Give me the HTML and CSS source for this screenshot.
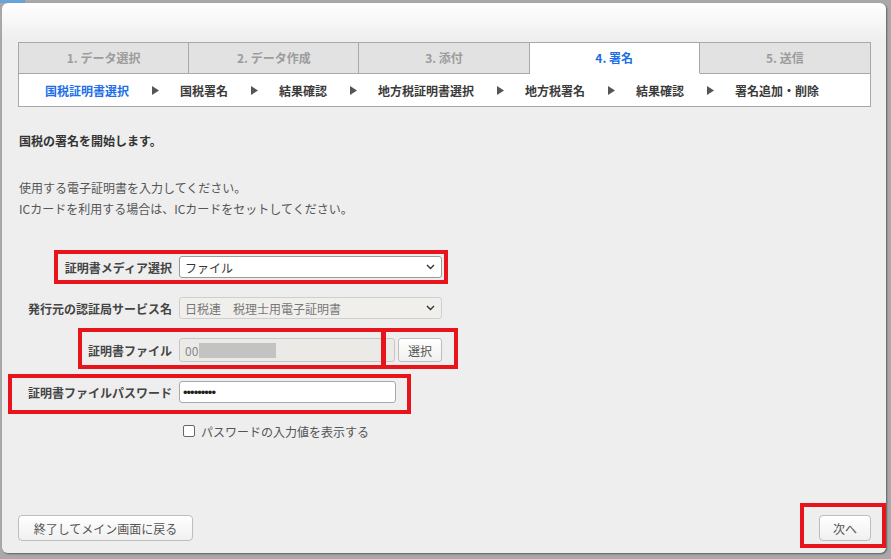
FILE: index.html
```html
<!DOCTYPE html>
<html lang="ja">
<head>
<meta charset="utf-8">
<title>署名</title>
<link rel="stylesheet" href="styles.css">
</head>
<body>
<div class="topstrip"></div>
<div class="dialog">
  <div class="steps">
    <div class="tabs">
      <div class="tab">1. データ選択</div>
      <div class="tab">2. データ作成</div>
      <div class="tab">3. 添付</div>
      <div class="tab active">4. 署名</div>
      <div class="tab">5. 送信</div>
    </div>
    <div class="substeps">
      <span class="sub current">国税証明書選択</span>
      <svg class="arrow" viewBox="0 0 7 9"><polygon points="0,0 7,4.5 0,9"/></svg>
      <span class="sub">国税署名</span>
      <svg class="arrow" viewBox="0 0 7 9"><polygon points="0,0 7,4.5 0,9"/></svg>
      <span class="sub">結果確認</span>
      <svg class="arrow" viewBox="0 0 7 9"><polygon points="0,0 7,4.5 0,9"/></svg>
      <span class="sub">地方税証明書選択</span>
      <svg class="arrow" viewBox="0 0 7 9"><polygon points="0,0 7,4.5 0,9"/></svg>
      <span class="sub">地方税署名</span>
      <svg class="arrow" viewBox="0 0 7 9"><polygon points="0,0 7,4.5 0,9"/></svg>
      <span class="sub">結果確認</span>
      <svg class="arrow" viewBox="0 0 7 9"><polygon points="0,0 7,4.5 0,9"/></svg>
      <span class="sub">署名追加・削除</span>
    </div>
  </div>

  <p class="lead">国税の署名を開始します。</p>
  <p class="info">使用する電子証明書を入力してください。<br>ICカードを利用する場合は、ICカードをセットしてください。</p>

  <div class="form">
    <div class="lbl">証明書メディア選択</div>
    <div class="select">
      <span>ファイル</span>
      <svg class="chev" viewBox="0 0 9 6"><polyline points="1,1 4.5,4.5 8,1"/></svg>
    </div>

    <div class="lbl">発行元の認証局サービス名</div>
    <div class="select disabled">
      <span>日税連　税理士用電子証明書</span>
      <svg class="chev" viewBox="0 0 9 6"><polyline points="1,1 4.5,4.5 8,1"/></svg>
    </div>

    <div class="lbl">証明書ファイル</div>
    <div class="filerow">
      <div class="input disabled"><span>00</span><span class="redact"></span></div>
      <button class="btn small" type="button">選択</button>
    </div>

    <div class="lbl">証明書ファイルパスワード</div>
    <div class="input pw"><span class="dots">•••••••••</span></div>

    <div class="lbl"></div>
    <div class="check"><span class="box"></span><span>パスワードの入力値を表示する</span></div>
  </div>

  <div class="footer">
    <button class="btn big" type="button">終了してメイン画面に戻る</button>
    <button class="btn next" type="button">次へ</button>
  </div>

  <div class="mark m1"></div>
  <div class="mark m2"></div>
  <div class="mark m3"></div>
  <div class="mark m4"></div>
  <div class="mark m5"></div>
</div>
</body>
</html>
```

FILE: styles.css
```css
html, body {
  margin: 0;
  padding: 0;
}

body {
  width: 891px;
  height: 559px;
  overflow: hidden;
  background: #a9a9a9;
  font-family: "Noto Sans CJK JP", "Noto Sans", sans-serif;
  position: relative;
}

.topstrip {
  position: absolute;
  left: 0;
  top: 0;
  width: 25px;
  height: 3px;
  background: #6aa3d8;
}

.dialog {
  position: relative;
  margin: 3px 0 0 2px;
  width: 884px;
  height: 550px;
  box-sizing: border-box;
  padding: 39px 15px 12px 16px;
  background: linear-gradient(#ffffff 0, #eeeeee 38px, #eeeeee 100%);
  border-radius: 6px;
  box-shadow: 1px 1px 2px rgba(0, 0, 0, 0.45);
  display: flex;
  flex-direction: column;
}

/* steps */
.steps {
  border: 1px solid #a8a8a8;
  background: #fff;
}

.tabs {
  display: grid;
  grid-template-columns: repeat(5, 1fr);
}

.tab {
  height: 30px;
  line-height: 30px;
  text-align: center;
  font-size: 12px;
  font-weight: bold;
  color: #9c9c9c;
  background: #e2e2e2;
  border-right: 1px solid #a8a8a8;
  border-bottom: 1px solid #a8a8a8;
}

.tab:last-child {
  border-right: 0;
}

.tab.active {
  background: #fff;
  color: #1c6fe6;
  border-bottom-color: #fff;
}

.substeps {
  height: 32px;
  display: flex;
  align-items: center;
  padding-left: 26px;
  font-size: 12px;
  font-weight: bold;
  color: #3a3a3a;
}

.sub {
  white-space: nowrap;
}

.sub.current {
  color: #1c6fe6;
}

.arrow {
  width: 7px;
  height: 9px;
  margin: 0 21px 0 23px;
  fill: #555;
}

/* text */
.lead {
  margin: 25px 0 0 1px;
  font-size: 12px;
  line-height: 18px;
  font-weight: bold;
  color: #333;
}

.info {
  margin: 27px 0 0 1px;
  font-size: 12px;
  line-height: 21px;
  color: #555;
}

/* form */
.form {
  margin-top: 37px;
  display: grid;
  grid-template-columns: 154px 263px;
  column-gap: 7px;
  row-gap: 19px;
  align-items: center;
}

.lbl {
  text-align: right;
  font-size: 12px;
  font-weight: bold;
  color: #444;
  white-space: nowrap;
}

.select {
  height: 22px;
  box-sizing: border-box;
  border: 1px solid #9a9a9a;
  border-radius: 3px;
  background: #fff;
  display: flex;
  align-items: center;
  justify-content: space-between;
  padding: 0 6px 0 5px;
  font-size: 12px;
  color: #333;
}

.select.disabled {
  background: #f1efec;
  border-color: #cfcfcf;
  color: #777;
}

.chev {
  width: 9px;
  height: 6px;
  fill: none;
  stroke: #333;
  stroke-width: 1.4;
}

.filerow {
  display: flex;
  align-items: center;
  gap: 3px;
}

.input {
  width: 217px;
  height: 22px;
  box-sizing: border-box;
  border: 1px solid #a9a9a9;
  border-radius: 3px;
  background: #fff;
  display: flex;
  align-items: center;
  padding: 0 5px;
  font-size: 12px;
}

.input.disabled {
  height: 24px;
  background: #ebeae7;
  border-color: #c6c6c6;
  color: #888;
}

.redact {
  width: 77px;
  height: 15px;
  background: #c3c3c3;
  margin-left: 1px;
}

.pw {
  height: 22px;
  padding-left: 3px;
}

.dots {
  font-family: "Liberation Sans", sans-serif;
  font-size: 13px;
  letter-spacing: -1px;
  color: #222;
}

.btn {
  font-family: "Noto Sans CJK JP", sans-serif;
  font-size: 12px;
  color: #555;
  background: linear-gradient(#ffffff, #f0f0f0);
  border: 1px solid #bdbdbd;
  border-radius: 4px;
  padding: 0;
  box-sizing: border-box;
}

.btn.small {
  width: 44px;
  height: 24px;
  border-radius: 3px;
}

.check {
  display: flex;
  align-items: center;
  gap: 6px;
  padding-left: 4px;
  font-size: 12px;
  color: #555;
  height: 18px;
}

.box {
  width: 12px;
  height: 12px;
  box-sizing: border-box;
  border: 1px solid #666;
  border-radius: 2px;
  background: #fff;
}

.footer {
  margin-top: auto;
  display: flex;
  justify-content: space-between;
  align-items: center;
}

.btn.big {
  width: 175px;
  height: 26px;
}

.btn.next {
  width: 52px;
  height: 26px;
}

/* red annotation boxes */
.mark {
  position: absolute;
  border: 4px solid #e8141c;
  box-sizing: border-box;
  pointer-events: none;
}

.m1 { left: 52px;  top: 247px; width: 394px; height: 34px; }
.m2 { left: 76px;  top: 325px; width: 308px; height: 41px; }
.m3 { left: 379px; top: 325px; width: 77px;  height: 41px; }
.m4 { left: 6px;   top: 371px; width: 403px; height: 40px; }
.m5 { left: 798px; top: 500px; width: 86px;  height: 45px; }
```
